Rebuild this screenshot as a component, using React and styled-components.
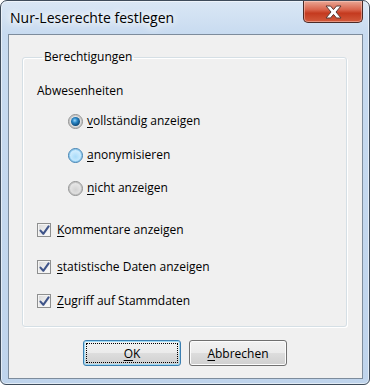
import React from 'react';
import styled, { createGlobalStyle } from 'styled-components';

const GlobalStyle = createGlobalStyle`
    html, body {
        margin: 0;
        padding: 0;
        background: #ffffff;
    }
    body {
        font-family: "Open Sans", "Noto Sans", sans-serif;
        font-size: 12px;
        color: #000;
    }
`;

const Window = styled.div`
    box-sizing: border-box;
    width: 370px;
    height: 385px;
    display: flex;
    flex-direction: column;
    border: 1px solid #3f4c5b;
    border-radius: 7px 7px 6px 6px;
    background: linear-gradient(180deg, #dae7f5 0px, #c8dbf0 33px, #bfd4ec 100%);
    box-shadow: inset 0 0 0 1px rgba(255, 255, 255, 0.55);
    overflow: hidden;
`;

const TitleBar = styled.div`
    height: 33px;
    flex: none;
    display: flex;
    align-items: flex-start;
    padding-left: 9px;
`;

const Title = styled.div`
    flex: 1;
    margin-top: 7px;
    font-size: 14px;
    line-height: 20px;
    color: #000;
    text-shadow: 0 0 6px #fff, 0 0 10px #fff, 0 0 14px rgba(255, 255, 255, 0.9);
`;

const CloseButton = styled.div`
    box-sizing: border-box;
    width: 60px;
    height: 22px;
    margin-right: 6px;
    display: flex;
    align-items: center;
    justify-content: center;
    border: 1px solid #4b2a26;
    border-top: none;
    border-radius: 0 0 5px 5px;
    background: linear-gradient(180deg, #eaa795 0%, #d9634b 42%, #c43a1f 58%, #d35a3c 100%);
    box-shadow: inset 0 0 0 1px rgba(255, 220, 210, 0.45);
`;

const Client = styled.div`
    flex: 1;
    display: flex;
    flex-direction: column;
    margin: 0 6px 5px 7px;
    border: 1px solid #7d8c9c;
    background: #f0f0f0;
`;

const Group = styled.fieldset`
    margin: 14px 15px 0 13px;
    padding: 0 0 16px 14px;
    height: 278px;
    box-sizing: border-box;
    border: 1px solid #d5dfe5;
    border-radius: 3px;
    box-shadow: inset 1px 1px 0 #fff, 1px 1px 0 #fff;
    display: flex;
    flex-direction: column;
    min-width: 0;
`;

const Legend = styled.legend`
    margin-left: 5px;
    padding: 0 2px;
    line-height: 16px;
    font-size: 12px;
`;

const Row = styled.div`
    display: flex;
    align-items: center;
    height: 16px;
    margin-top: ${p => p.$gap}px;
    padding-left: ${p => p.$indent || 0}px;
    font-size: 12px;
    line-height: 16px;
    white-space: nowrap;
`;

const Radio = styled.span`
    box-sizing: border-box;
    width: 15px;
    height: 15px;
    margin-right: 4px;
    border-radius: 50%;
    display: flex;
    align-items: center;
    justify-content: center;
    border: 1px solid ${p => (p.$hover ? '#3c7fb1' : '#8e8f8f')};
    background: ${p =>
        p.$hover
            ? 'radial-gradient(circle at 50% 60%, #a9dcfa 0%, #cdebfd 55%, #e6f5fe 100%)'
            : 'radial-gradient(circle at 50% 60%, #d2d2d2 0%, #e4e4e4 55%, #f6f6f6 100%)'};
    box-shadow: inset 0 0 0 1px ${p => (p.$hover ? '#8ccaf0' : '#c4c4c4')};
`;

const RadioDot = styled.span`
    width: 9px;
    height: 9px;
    border-radius: 50%;
    background: radial-gradient(circle at 42% 38%, #9ad6f8 0%, #2a86c6 32%, #0c4876 72%, #082a4a 100%);
`;

const Check = styled.span`
    box-sizing: border-box;
    width: 14px;
    height: 14px;
    margin-right: 6px;
    display: flex;
    align-items: center;
    justify-content: center;
    border: 1px solid #8e8f8f;
    background: linear-gradient(135deg, #d6d6d6 0%, #f0f0f0 60%, #fdfdfd 100%);
    box-shadow: inset 0 0 0 1px #f4f4f4;
`;

const Key = styled.span`
    text-decoration: underline;
    text-underline-offset: 2px;
`;

const ButtonBar = styled.div`
    display: flex;
    justify-content: center;
    gap: 8px;
    margin-top: 13px;
    padding-right: 1px;
`;

const Button = styled.div`
    box-sizing: border-box;
    width: 98px;
    height: 26px;
    display: flex;
    align-items: center;
    justify-content: center;
    font-size: 12px;
    border-radius: 3px;
    border: 1px solid ${p => (p.$default ? '#3c7fb1' : '#707070')};
    background: linear-gradient(180deg, #f2f2f2 0%, #ebebeb 48%, #dddddd 52%, #cfcfcf 100%);
    box-shadow: inset 0 0 0 1px ${p => (p.$default ? '#9fdcf7' : '#fcfcfc')};
    outline: ${p => (p.$default ? '1px dotted #000' : 'none')};
    outline-offset: -4px;
`;

function CloseIcon() {
    return (
        <svg width="19" height="14" viewBox="0 0 19 14">
            <path
                d="M2 1 L6.5 1 L9.5 4.6 L12.5 1 L17 1 L12 7 L17 13 L12.5 13 L9.5 9.4 L6.5 13 L2 13 L7 7 Z"
                fill="#ffffff"
                stroke="#5a3a36"
                strokeWidth="1"
                strokeLinejoin="round"
            />
        </svg>
    );
}

function CheckMark() {
    return (
        <svg width="11" height="11" viewBox="0 0 11 11">
            <path d="M1.5 5.6 L4.3 8.8 L9.6 1.4" fill="none" stroke="#40558a" strokeWidth="2.1" strokeLinecap="round" strokeLinejoin="round" />
        </svg>
    );
}

function RadioRow({ gap, checked, hover, keyChar, rest }) {
    return (
        <Row $gap={gap} $indent={31}>
            <Radio $hover={hover}>{checked && <RadioDot />}</Radio>
            <span>
                <Key>{keyChar}</Key>
                {rest}
            </span>
        </Row>
    );
}

function CheckRow({ gap, keyChar, rest }) {
    return (
        <Row $gap={gap}>
            <Check>
                <CheckMark />
            </Check>
            <span>
                <Key>{keyChar}</Key>
                {rest}
            </span>
        </Row>
    );
}

export default function App() {
    return (
        <>
            <GlobalStyle />
            <Window>
                <TitleBar>
                    <Title>Nur-Leserechte festlegen</Title>
                    <CloseButton>
                        <CloseIcon />
                    </CloseButton>
                </TitleBar>
                <Client>
                    <Group>
                        <Legend>Berechtigungen</Legend>
                        <Row $gap={18}>Abwesenheiten</Row>
                        <RadioRow gap={14} checked keyChar="v" rest="ollständig anzeigen" />
                        <RadioRow gap={18} hover keyChar="a" rest="nonymisieren" />
                        <RadioRow gap={17} keyChar="n" rest="icht anzeigen" />
                        <CheckRow gap={26} keyChar="K" rest="ommentare anzeigen" />
                        <CheckRow gap={21} keyChar="s" rest="tatistische Daten anzeigen" />
                        <CheckRow gap={18} keyChar="Z" rest="ugriff auf Stammdaten" />
                    </Group>
                    <ButtonBar>
                        <Button $default>
                            <Key>O</Key>K
                        </Button>
                        <Button>
                            <Key>A</Key>bbrechen
                        </Button>
                    </ButtonBar>
                </Client>
            </Window>
        </>
    );
}
